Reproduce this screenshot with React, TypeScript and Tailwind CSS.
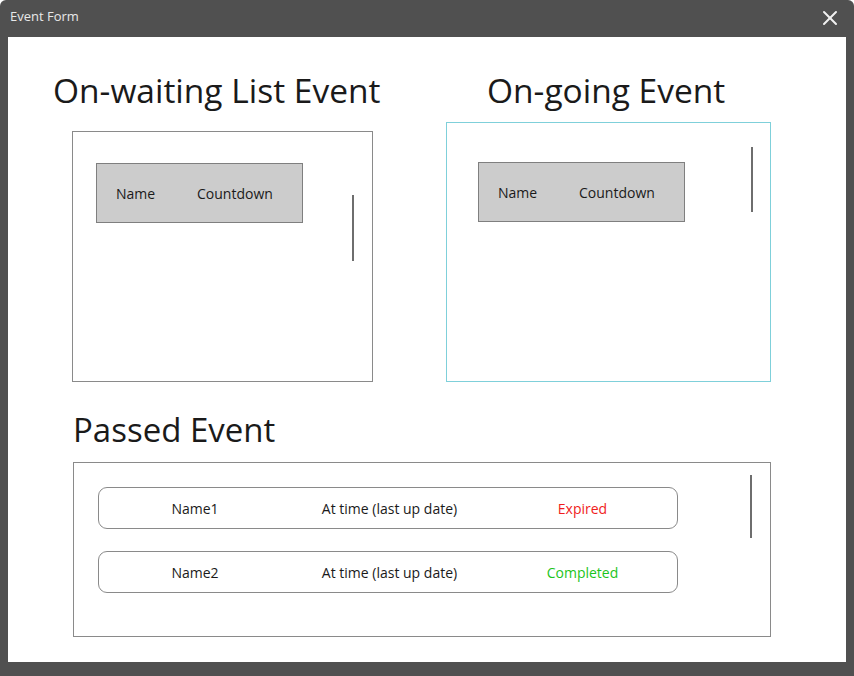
import { X } from "lucide-react"

const font = { fontFamily: '"Open Sans", "Noto Sans", sans-serif' }

function ScrollLine({ className }: { className: string }) {
  return <div className={`w-[2px] bg-[#6e6e6e] ${className}`} />
}

function HeaderChip({ className }: { className: string }) {
  return (
    <div
      className={`flex h-[60px] w-[207px] items-center border border-[#7f7f7f] bg-[#cccccc] pl-[19px] text-[14px] text-[#1a1a1a] ${className}`}
    >
      <span className="w-[81px]">Name</span>
      <span>Countdown</span>
    </div>
  )
}

const passed = [
  { name: "Name1", status: "Expired", color: "text-[#f01c1c]" },
  { name: "Name2", status: "Completed", color: "text-[#1cc41c]" },
]

export default function App() {
  return (
    <div className="flex h-[676px] w-[854px] flex-col rounded-t-[6px] bg-[#505050]" style={font}>
      {/* Title bar */}
      <div className="flex h-[37px] items-start justify-between pl-[10px] pr-[12px] pt-[7px]">
        <span className="text-[13px] text-[#e8e8e8]">Event Form</span>
        <X className="-mt-[1px] h-[24px] w-[24px] text-[#f0f0f0]" strokeWidth={2} />
      </div>

      {/* Content */}
      <div className="mx-[8px] mb-[14px] flex flex-1 flex-col bg-white text-[#1a1a1a]">
        <div className="flex h-[345px]">
          {/* On-waiting */}
          <div className="flex w-[438px] flex-col">
            <h1 className="mt-[33px] pl-[45px] text-[33.5px] leading-[40px]">On-waiting List Event</h1>
            <div className="ml-[64px] mt-[21px] flex h-[251px] w-[301px] items-start border border-[#8a8a8a]">
              <HeaderChip className="ml-[23px] mt-[31px]" />
              <ScrollLine className="ml-[49px] mt-[63px] h-[66px]" />
            </div>
          </div>

          {/* On-going */}
          <div className="flex flex-col">
            <h1 className="mt-[33px] pl-[41px] text-[33.5px] leading-[40px]">On-going Event</h1>
            <div className="mt-[12px] flex h-[260px] w-[325px] items-start border border-[#7fd0da]">
              <HeaderChip className="ml-[31px] mt-[39px] w-[206px]" />
              <ScrollLine className="ml-[66px] mt-[24px] h-[65px]" />
            </div>
          </div>
        </div>

        {/* Passed */}
        <h1 className="mt-[28px] pl-[65px] text-[33px] leading-[40px]">Passed Event</h1>
        <div className="ml-[65px] mt-[12px] flex h-[175px] w-[698px] items-start border border-[#8a8a8a]">
          <div className="ml-[24px] mt-[24px] flex flex-col gap-[22px]">
            {passed.map((p) => (
              <div
                key={p.name}
                className="grid h-[42px] w-[580px] grid-cols-[192px_197px_1fr] items-center rounded-[9px] border border-[#8a8a8a] text-center text-[14px]"
              >
                <span>{p.name}</span>
                <span>At time (last up date)</span>
                <span className={p.color}>{p.status}</span>
              </div>
            ))}
          </div>
          <ScrollLine className="ml-[72px] mt-[12px] h-[63px]" />
        </div>
      </div>
    </div>
  )
}
